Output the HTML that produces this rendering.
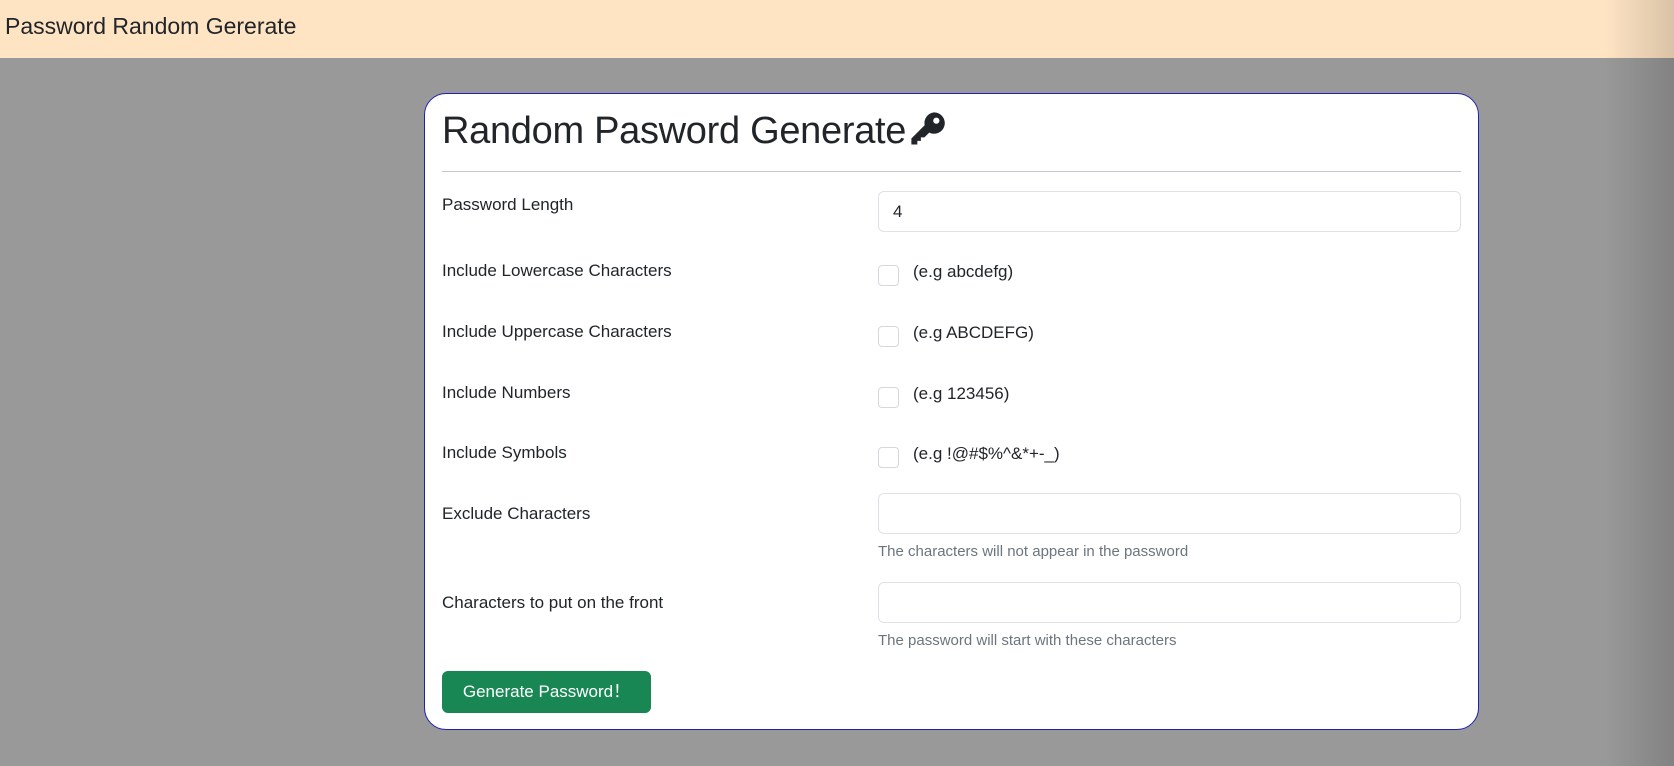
<!DOCTYPE html>
<html><head><meta charset="utf-8"><style>
body{margin:0;width:1674px;height:766px;background:#999;font-family:"Liberation Sans",sans-serif;color:#212529;position:relative;overflow:hidden}
.nav{position:absolute;left:0;top:0;width:1674px;height:58px;background:#ffe4c4;}
.nav span{position:absolute;left:5px;top:13px;font-size:23px;}
.shade{position:absolute;right:0;top:0;width:70px;height:766px;background:linear-gradient(90deg,rgba(0,0,0,0),rgba(0,0,0,.15));}
.card{position:absolute;left:424px;top:93px;width:1053px;height:635px;background:#fff;border:1px solid #2020b0;border-radius:22px;}
.t{position:absolute;left:17px;top:16px;font-size:38px;letter-spacing:-0.3px}
.hr{position:absolute;left:17px;right:17px;top:77px;border-top:1px solid #c8c8c8}
.l{position:absolute;left:17px;font-size:17px}
.in{position:absolute;left:453px;width:583px;height:41px;border:1px solid #dee2e6;border-radius:6px;box-sizing:border-box;font-size:17px;padding:10px 14px}
.cb{position:absolute;left:453px;width:21px;height:21px;border:1px solid #d5d8dc;border-radius:4px;box-sizing:border-box}
.ct{position:absolute;left:488px;font-size:17px}
.h{position:absolute;left:453px;font-size:15px;color:#6c757d}
.btn{position:absolute;left:17px;top:577px;width:209px;height:42px;background:#198754;color:#fff;border-radius:6px;font-size:17px;line-height:42px;text-align:center}
</style></head><body>
<div class="nav"><span>Password Random Gererate</span></div>
<div class="card">
<div class="t">Random Pasword Generate<svg width="38" height="38" viewBox="0 0 16 16" style="vertical-align:-5px;margin-left:3px"><path fill="#212529" d="M10.5 1a4.5 4.5 0 1 1-2 8.5L6.5 11.5H5v1.5H3.5v1.5H1v-2.5l5.6-5.6A4.5 4.5 0 0 1 10.5 1zm1 2.2a1.3 1.3 0 1 0 .01 0z"/></svg></div>
<div class="hr"></div>
<div class="l" style="top:101px">Password Length</div>
<div class="in" style="top:97px">4</div>
<div class="l" style="top:167px">Include Lowercase Characters</div>
<div class="cb" style="top:171px"></div><div class="ct" style="top:168px">(e.g abcdefg)</div>
<div class="l" style="top:228px">Include Uppercase Characters</div>
<div class="cb" style="top:232px"></div><div class="ct" style="top:229px">(e.g ABCDEFG)</div>
<div class="l" style="top:289px">Include Numbers</div>
<div class="cb" style="top:293px"></div><div class="ct" style="top:290px">(e.g 123456)</div>
<div class="l" style="top:349px">Include Symbols</div>
<div class="cb" style="top:353px"></div><div class="ct" style="top:350px">(e.g !@#$%^&amp;*+-_)</div>
<div class="l" style="top:410px">Exclude Characters</div>
<div class="in" style="top:399px"></div>
<div class="h" style="top:449px">The characters will not appear in the password</div>
<div class="l" style="top:499px">Characters to put on the front</div>
<div class="in" style="top:488px"></div>
<div class="h" style="top:538px">The password will start with these characters</div>
<div class="btn">Generate Password！</div>
</div>
<div class="shade"></div>
</body></html>
